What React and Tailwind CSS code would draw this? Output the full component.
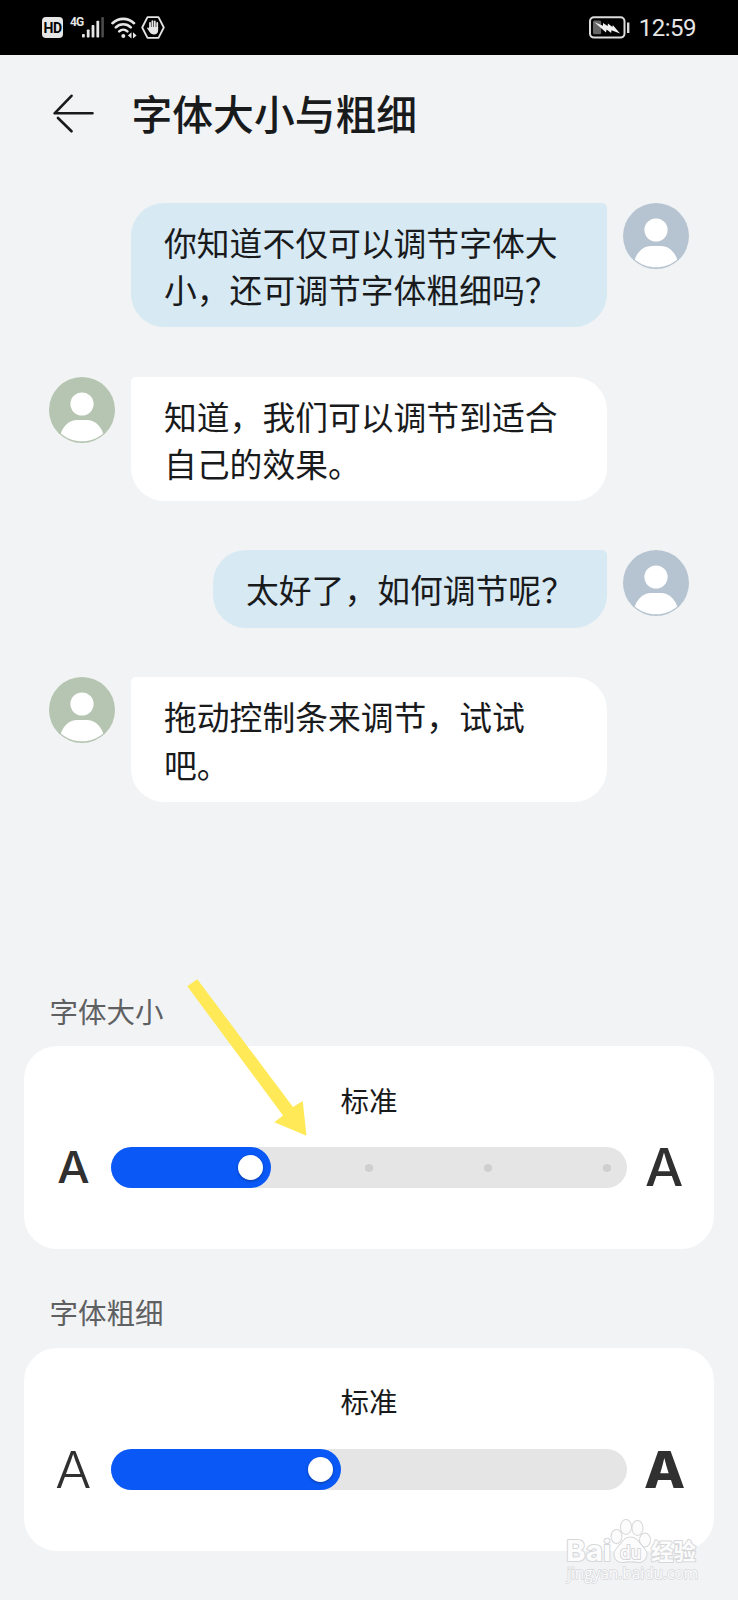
const MESSAGES = [
  { id: 1, side: 'right', lines: ['你知道不仅可以调节字体大', '小，还可调节字体粗细吗？'] },
  { id: 2, side: 'left', lines: ['知道，我们可以调节到适合', '自己的效果。'] },
  { id: 3, side: 'right', lines: ['太好了，如何调节呢？'] },
  { id: 4, side: 'left', lines: ['拖动控制条来调节，试试', '吧。'] },
];

function StatusBar() {
  return (
    <div className="flex h-[55px] shrink-0 items-center justify-between bg-black px-[42px] text-[#e6e6e6]">
      <div className="flex items-center">
        <span className="flex h-[21px] w-[21px] items-center justify-center rounded-[4px] bg-[#e6e6e6] font-['Roboto',sans-serif] text-[14px] leading-none font-bold tracking-[-0.5px] text-black">
          HD
        </span>
        <span className="-mt-3 ml-[7px] w-3 font-['Roboto',sans-serif] text-[12px] leading-none font-bold tracking-[-1px]">
          4G
        </span>
        <svg width="23" height="21" viewBox="0 0 23 21" fill="#e6e6e6">
          <rect x="0" y="17" width="2.8" height="3.5" rx="0.8" />
          <rect x="4.8" y="12.5" width="2.8" height="8" rx="0.8" />
          <rect x="9.6" y="8" width="2.8" height="12.5" rx="0.8" />
          <rect x="14.4" y="3.8" width="2.8" height="16.7" rx="0.8" />
          <rect x="19.3" y="0" width="2.6" height="20.5" rx="0.8" fill="#4a4a4a" />
        </svg>
        <svg className="ml-[6px]" width="26" height="22" viewBox="0 0 26 22" fill="none" stroke="#e6e6e6" strokeWidth="2.6" strokeLinecap="round">
          <path d="M1.5 6.2a15.4 15.4 0 0 1 21.5 0" />
          <path d="M4.8 10.4a10.6 10.6 0 0 1 15 0" />
          <path d="M8.2 14.4a6 6 0 0 1 8.2 0" />
          <circle cx="12.3" cy="19" r="2" fill="#e6e6e6" stroke="none" />
          <path d="M20.5 15.2v6.2l-3.6-3z M22 15.2v6.2l3.6-3z" fill="#e6e6e6" stroke="none" />
        </svg>
        <svg className="ml-[4px]" width="24" height="23" viewBox="0 0 24 23" fill="none" stroke="#e6e6e6">
          <path d="M6.5 1.2h11L22.8 11.5 17.5 21.8h-11L1.2 11.5z" strokeWidth="1.8" strokeLinejoin="round" />
          <path d="M9 12V6.8M11.4 12V5.2M13.8 12V5.4M16.2 13V7" strokeWidth="1.8" strokeLinecap="round" />
          <path d="M8.1 11h9v3.4c0 2.6-1.7 4-4.2 4-2 0-3.4-.8-4.3-2.4l-2.7-4c.9-.9 1.7-.6 2.2.2z" fill="#e6e6e6" stroke="none" />
        </svg>
      </div>
      <div className="flex items-center">
        <svg width="41" height="23" viewBox="0 0 41 23" fill="none">
          <rect x="1" y="1.2" width="34.5" height="20.4" rx="4" stroke="#dcdcdc" strokeWidth="2" />
          <rect x="4" y="4.6" width="8.2" height="13.6" rx="1.5" fill="#666" />
          <path d="M5.5 6.3 14 9.8 14 7l4.6 3 .4-2.6 4.4 3.7.4-2 7.2 8.400-8.600-3.300-.2 2.800-4.600-3.600-.6 3.100z" fill="#f2f2f2" />
          <rect x="38" y="6.5" width="2.4" height="10.5" fill="#dcdcdc" />
        </svg>
        <span className="ml-[8px] w-[58px] text-right font-['Roboto',sans-serif] text-[24px] leading-none tracking-[-0.5px]">
          12:59
        </span>
      </div>
    </div>
  );
}

function Avatar({ side }) {
  return (
    <svg
      className={side === 'right' ? 'shrink-0 text-[#b6c4d1]' : 'shrink-0 text-[#b5c5b1]'}
      width="66"
      height="66"
      viewBox="0 0 66 66"
    >
      <circle cx="33" cy="33" r="33" fill="currentColor" />
      <circle cx="33" cy="27" r="11.6" fill="#fff" />
      <path d="M11.8 56.5C14.5 48.5 20.5 43 28 43h10c7.5 0 13.5 5.5 16.2 13.5C48.5 61.5 41 64.3 33 64.3S17.5 61.5 11.8 56.5z" fill="#fff" />
    </svg>
  );
}

function Message({ side, lines }) {
  const right = side === 'right';
  return (
    <div className={`flex items-start gap-4 ${right ? 'justify-end' : ''}`}>
      {!right && <Avatar side={side} />}
      <div
        className={`rounded-[33px] pt-[15px] pb-[14.5px] pl-[33px] text-[32.8px] leading-[47.4px] whitespace-nowrap ${
          right ? 'rounded-tr-[5px] bg-[#d7e9f3]' : 'rounded-tl-[5px] bg-white'
        } ${lines.length > 1 ? 'w-[476px]' : 'min-h-[77.5px] w-[394px]'}`}
      >
        {lines.map((line) => (
          <p key={line}>{line}</p>
        ))}
      </div>
      {right && <Avatar side={side} />}
    </div>
  );
}

function Slider({ fill, dots }) {
  return (
    <div className="relative h-[41px] w-[516.5px] shrink-0 rounded-full bg-[#e5e5e5]">
      {dots.map((x) => (
        <span key={x} className="absolute top-[16.5px] size-2 rounded-full bg-[#cfcfcf]" style={{ left: x }} />
      ))}
      <div
        className="flex h-full items-center justify-end rounded-full bg-[#0a59f7] pr-[8px]"
        style={{ width: fill }}
      >
        <span className="size-[25px] rounded-full bg-white shadow-[0_1px_3px_rgba(0,0,0,0.35)]" />
      </div>
    </div>
  );
}

function SettingCard({ title, value, before, after, fill, dots = [] }) {
  return (
    <section>
      <h2 className="pl-[25.5px] text-[28.5px] leading-10 text-[#5f6062]">{title}</h2>
      <div className="mt-[15.5px] h-[203px] rounded-[33px] bg-white pt-[33.5px]">
        <p className="text-center text-[28.5px] leading-10">{value}</p>
        <div className="mt-[27.5px] flex items-center">
          <div className="flex w-[86.5px] justify-center pl-[12px] font-['Inter',sans-serif] leading-[41px] text-[#303030]">
            {before}
          </div>
          <Slider fill={fill} dots={dots} />
          <div className="flex w-[87px] justify-center pr-[12px] font-['Inter',sans-serif] leading-[41px] text-[#303030]">
            {after}
          </div>
        </div>
      </div>
    </section>
  );
}

function Pointer() {
  return (
    <svg className="absolute top-[979px] left-[187px]" width="121" height="158" viewBox="0 0 121 158">
      <path d="M0.3 7.3 10.3 0.3 106 128 115.7 122 119.5 156.7 87.3 143.3 96 136.5z" fill="#ffe957" />
    </svg>
  );
}

function Watermark() {
  return (
    <svg
      className="absolute top-[1515px] left-[562px]"
      width="142"
      height="75"
      viewBox="0 0 142 75"
      fill="#fcfcfd"
      stroke="#d6d7d9"
      strokeWidth="2"
      paintOrder="stroke"
      strokeLinejoin="round"
    >
      <text x="4" y="46" textLength="45" lengthAdjust="spacingAndGlyphs" fontFamily="Inter, sans-serif" fontSize="29" fontWeight="700">Bai</text>
      <ellipse cx="54.5" cy="21.5" rx="5" ry="6.5" />
      <ellipse cx="64" cy="12" rx="5" ry="7" />
      <ellipse cx="75.5" cy="13" rx="5" ry="7" />
      <ellipse cx="83" cy="25" rx="5" ry="6.5" />
      <path d="M68.500 22.500c5 0 7.500 3.500 10 7 2.500 3 6 5.500 6 10s-3.500 7.500-8 7.500c-3 0-5-.7-8-.7s-5 .7-8 .7c-4.500 0-8-3-8-7.500s3.500-7 6-10c2.500-3.500 5-7 10-7z" />
      <text x="58" y="43.5" textLength="21" lengthAdjust="spacingAndGlyphs" fontFamily="Inter, sans-serif" fontSize="18" fontWeight="500">du</text>
      <text x="89" y="45" textLength="45" fontFamily="Noto Sans CJK SC, sans-serif" fontSize="22.5" fontWeight="700">经验</text>
      <text x="5" y="64" textLength="131" lengthAdjust="spacingAndGlyphs" fontFamily="Open Sans, sans-serif" fontSize="15.5" strokeWidth="1.4">jingyan.baidu.com</text>
    </svg>
  );
}

export default function App() {
  return (
    <div className="relative flex h-[1600px] w-[738px] flex-col overflow-hidden bg-[#f1f3f5] font-['Noto_Sans_CJK_SC',sans-serif] text-[#191a1c]">
      <StatusBar />

      <header className="flex h-[118px] shrink-0 items-center pl-[52px]">
        <svg width="43" height="40" viewBox="0 0 43 40" fill="none" stroke="#191a1c" strokeWidth="2.6" strokeLinecap="round">
          <path d="M19.500 1.800 2.600 19.300H40.500M6 24 19.500 37.300" strokeLinejoin="round" />
        </svg>
        <h1 className="-mt-0.5 ml-[36.5px] text-[40.8px] leading-none font-medium">字体大小与粗细</h1>
      </header>

      <main className="flex flex-col gap-[49.4px] px-[49px] pt-[30px]">
        {MESSAGES.map((m) => (
          <Message key={m.id} side={m.side} lines={m.lines} />
        ))}
      </main>

      <div className="mt-[188.9px] flex flex-col gap-[43px] px-6">
        <SettingCard
          title="字体大小"
          value="标准"
          before={<span className="scale-x-105 text-[43.5px] font-medium">A</span>}
          after={<span className="scale-x-105 text-[51.5px] font-medium">A</span>}
          fill={160}
          dots={[254, 373.5, 492.5]}
        />
        <SettingCard
          title="字体粗细"
          value="标准"
          before={<span className="scale-x-105 text-[51px] font-light">A</span>}
          after={<span className="scale-x-105 text-[51px] font-extrabold">A</span>}
          fill={230.5}
        />
      </div>

      <Pointer />
      <Watermark />
    </div>
  );
}
